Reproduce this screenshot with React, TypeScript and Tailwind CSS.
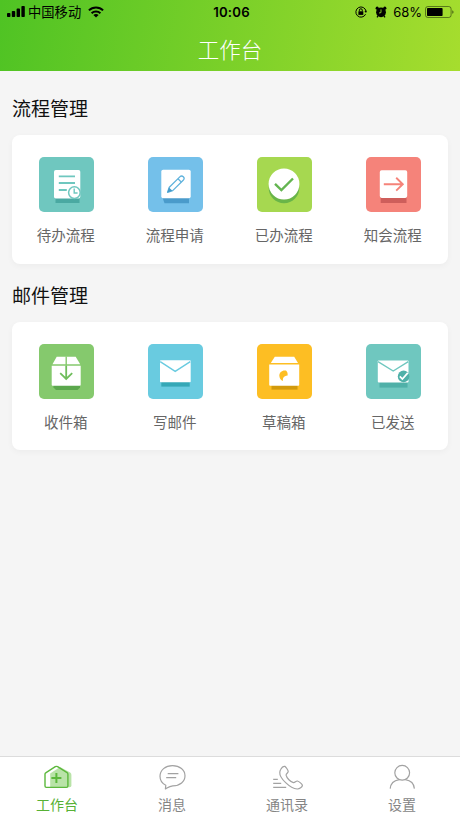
import type { ReactNode } from "react";

interface Entry {
  label: string;
  tile: string;
  icon: ReactNode;
}

const flowEntries: Entry[] = [
  {
    label: "待办流程",
    tile: "bg-[#6fc7bf]",
    icon: (
      <>
        <rect x="16.5" y="38" width="24" height="8" fill="#4aa9a2" />
        <rect x="15" y="13" width="26.3" height="28.5" rx="1.8" fill="#fff" />
        <path d="M19.8 19.3H36M19.8 26H36M19.8 33H27.8" stroke="#6fc7bf" strokeWidth="1.8" />
        <circle cx="35.4" cy="35.6" r="5.8" fill="#fff" stroke="#6fc7bf" strokeWidth="1.5" />
        <path d="M35.2 31.6V36H38.6" fill="none" stroke="#6fc7bf" strokeWidth="1.4" />
      </>
    ),
  },
  {
    label: "流程申请",
    tile: "bg-[#74c0ea]",
    icon: (
      <>
        <path d="M15 38H41V46.3H16.5L15 42Z" fill="#4a9bcb" />
        <rect x="13.3" y="12.7" width="29.4" height="28.6" rx="1.8" fill="#fff" />
        <g fill="none" stroke="#5fb2dc" strokeWidth="1.3" strokeLinejoin="round">
          <path d="M19.6 35.3L21.3 30.2L31.8 19.9Q33.6 18.2 35.3 19.8Q37 21.5 35.2 23.3L24.7 33.6Z" />
          <path d="M30 21.8L33.3 25.1" />
        </g>
        <path d="M19.3 35.6L21 30.6L24.4 33.8Z" fill="#459bca" />
      </>
    ),
  },
  {
    label: "已办流程",
    tile: "bg-[#a6d850]",
    icon: (
      <>
        <circle cx="27" cy="31" r="15.3" fill="#69b548" />
        <circle cx="27" cy="27" r="15.4" fill="#fff" />
        <path d="M18 26.8L24.4 33L36 21.5" fill="none" stroke="#64b551" strokeWidth="2.4" />
      </>
    ),
  },
  {
    label: "知会流程",
    tile: "bg-[#f5837a]",
    icon: (
      <>
        <rect x="14.7" y="38" width="25.8" height="8" fill="#ce5e5b" />
        <rect x="13.8" y="13.3" width="27.4" height="27.6" rx="1.8" fill="#fff" />
        <path d="M17.8 27.2H37M30.2 20.8L36.8 27.2L30.2 33.6" fill="none" stroke="#f5837a" strokeWidth="1.9" />
      </>
    ),
  },
];

const mailEntries: Entry[] = [
  {
    label: "收件箱",
    tile: "bg-[#85c96d]",
    icon: (
      <>
        <path d="M14.5 39H41V43.5L38.5 46H17L14.5 43.5Z" fill="#5ba74d" />
        <path d="M17.7 12.8H36.7L41.2 20.3H13.5Z" fill="#fff" />
        <path d="M12.7 21.8H41.7V40.8Q41.7 41.8 40.7 41.8H13.7Q12.7 41.8 12.7 40.8Z" fill="#fff" />
        <path d="M27.2 12.5V22" stroke="#85c96d" strokeWidth="1.4" />
        <path d="M27.2 22V34.8M21.2 29.2L27.2 34.9L33.2 29.2" fill="none" stroke="#6fbd5c" strokeWidth="1.8" />
      </>
    ),
  },
  {
    label: "写邮件",
    tile: "bg-[#69cbe0]",
    icon: (
      <>
        <rect x="13.3" y="36" width="28.4" height="6.6" fill="#35a8b7" />
        <rect x="12" y="16.3" width="30.7" height="22" rx="0.8" fill="#fff" />
        <path d="M12.2 17.6L27.2 27.3L42.3 17.6" fill="none" stroke="#69cbe0" strokeWidth="1.4" />
      </>
    ),
  },
  {
    label: "草稿箱",
    tile: "bg-[#fdbe23]",
    icon: (
      <>
        <rect x="14.5" y="38" width="26" height="7.6" fill="#d29a0c" />
        <path d="M17.8 12.8H37.2L41 18.9H13.8Z" fill="#fff" />
        <path d="M12.2 20.5H42.2V40.8Q42.2 41.8 41.2 41.8H13.2Q12.2 41.8 12.2 40.8Z" fill="#fff" />
        <path d="M29 26.5C25 25.8 22.3 28.6 22.3 31.5C22.3 34 23.8 36.2 26 37C25.6 34.4 26.3 32.2 30.6 31.6C30.9 29.2 30.2 27.6 29 26.5Z" fill="#fdbe23" />
      </>
    ),
  },
  {
    label: "已发送",
    tile: "bg-[#6fc7bf]",
    icon: (
      <>
        <rect x="13.5" y="36" width="28" height="7.6" fill="#4fb0a8" />
        <rect x="11.8" y="16.5" width="30.7" height="21.9" rx="0.8" fill="#fff" />
        <path d="M12 17.7L27.2 27L42.3 17.7" fill="none" stroke="#6fc7bf" strokeWidth="1.4" />
        <circle cx="37.6" cy="32.4" r="5.8" fill="#4fb0a8" />
        <path d="M33.8 32.4L36.4 35L41.8 28.9" fill="none" stroke="#fff" strokeWidth="1.7" />
      </>
    ),
  },
];

const tabs = [
  {
    label: "工作台",
    color: "text-[#57b135]",
    stroke: "#5cb83c",
    icon: (
      <>
        <path d="M10.2 9.5L20 3L30.2 8.6Q31.4 9.3 31.4 10.8V21.6Q31.4 23.2 29.8 23.2H10.2Z" fill="#b9e3a8" stroke="none" />
        <path d="M5.7 8.8Q5 9.2 5 10.2V22.1Q5 23.4 6.3 23.4H26.5Q27.9 23.4 27.9 22.1V10.2Q27.9 9.2 27.1 8.7L17.6 2.7Q16.4 2 15.3 2.7Z" strokeWidth="1.4" />
        <path d="M16.4 9V19M11.4 14H21.4" strokeWidth="2" />
      </>
    ),
  },
  {
    label: "消息",
    color: "text-[#858585]",
    stroke: "#a2a2a2",
    icon: (
      <>
        <path d="M10.8 21.2C6.7 19.3 5 16 5 12.3C5 6 10.4 1.6 17.5 1.6C24.8 1.6 30 6 30 11.7C30 17.5 25 21.8 17.8 21.8C14.6 22 12.6 23.6 10.4 24.9Z" />
        <path d="M12.7 9.7H23.4M11.2 13.6H21.2" />
      </>
    ),
  },
  {
    label: "通讯录",
    color: "text-[#858585]",
    stroke: "#a2a2a2",
    icon: (
      <>
        <path d="M10.8 5.2C11.8 3.3 13.4 2 14.9 2.4C16 3 18.2 6.4 18.2 7.6C18.2 9 15.9 9.7 16.1 11.2C16.6 14 20.6 18 23.4 18.6C25 18.8 26 16.7 27.4 17C29 17.4 32.3 20.2 32.4 21.4C32.3 23 29.6 25.1 27.2 25C20 24.6 9.4 14 9.8 8.6C9.8 7.2 10.2 6.2 10.8 5.2Z" />
        <path d="M3.2 15.4H7.8M3.2 19.4H11.2M3.2 23.4H16.2" />
      </>
    ),
  },
  {
    label: "设置",
    color: "text-[#858585]",
    stroke: "#a2a2a2",
    icon: (
      <>
        <circle cx="17.2" cy="8.8" r="7.4" />
        <path d="M5.2 24.6C5.6 19.4 9.4 16.4 14.2 15.6M20.4 15.6C25.4 16.4 29 19.4 29.4 24.6" />
      </>
    ),
  },
];

function StatusBar() {
  return (
    <div className="flex h-6 items-center pl-[7px] pr-[6px] text-[13px] leading-none text-black">
      <div className="flex flex-1 items-center">
        <svg width="18" height="11" viewBox="0 0 18 11" fill="currentColor">
          <rect x="0" y="7" width="3.4" height="4" rx="0.8" />
          <rect x="4.8" y="5" width="3.4" height="6" rx="0.8" />
          <rect x="9.6" y="2.6" width="3.4" height="8.4" rx="0.8" />
          <rect x="14.4" y="0" width="3.4" height="11" rx="0.8" />
        </svg>
        <span className="ml-[3px] text-[13.3px]">中国移动</span>
        <svg className="ml-[7px]" width="16" height="12" viewBox="0 0 16 12" fill="none" stroke="currentColor" strokeWidth="2">
          <path d="M0.9 4.4C4.8 0.6 11.2 0.6 15.1 4.4" />
          <path d="M3.6 7.2C6 4.9 10 4.9 12.4 7.2" />
          <path d="M8 11.6L5.4 9C6.9 7.8 9.1 7.8 10.6 9Z" fill="currentColor" stroke="none" />
        </svg>
      </div>
      <span className="pt-px pl-[2px] font-[Inter] text-[13.2px] font-semibold tracking-[0.2px]">10:06</span>
      <div className="flex flex-1 items-center justify-end">
        <svg width="12" height="12" viewBox="0 0 12 12" fill="none" stroke="currentColor" strokeWidth="1">
          <path d="M10.6 8.2A5.1 5.1 0 1 1 11 5.2" />
          <path d="M9.4 5L11 6.9L12 4.8Z" fill="currentColor" stroke="none" />
          <rect x="3.4" y="5.3" width="4.9" height="3.6" fill="currentColor" stroke="none" />
          <path d="M4.4 5.4V4.2A1.45 1.45 0 0 1 7.3 4.2V5.4" />
        </svg>
        <svg className="ml-2" width="12" height="12" viewBox="0 0 12 12" fill="currentColor">
          <circle cx="6" cy="6.3" r="4.9" />
          <circle cx="2.2" cy="2.2" r="1.6" />
          <circle cx="9.8" cy="2.2" r="1.6" />
          <path d="M3 9.8L2 11.3M9 9.8L10 11.3" stroke="currentColor" strokeWidth="1.2" />
          <path d="M6 3.4V6.6L4 7" fill="none" stroke="#8fd62c" strokeWidth="0.9" />
        </svg>
        <span className="ml-[6px] font-[Inter] text-[13px]">68%</span>
        <svg className="ml-[3px]" width="29" height="13" viewBox="0 0 29 13">
          <rect x="0.5" y="0.5" width="25.6" height="11" rx="2.4" fill="none" stroke="#000" strokeOpacity="0.45" />
          <rect x="2" y="2" width="15.6" height="8" rx="0.8" />
          <path d="M27.2 4.2Q28.6 4.6 28.6 6T27.2 7.8Z" fillOpacity="0.5" />
        </svg>
      </div>
    </div>
  );
}

function Section({ title, entries }: { title: string; entries: Entry[] }) {
  return (
    <section>
      <h2 className="flex h-[58px] items-center pt-[3px] text-[19px] leading-none text-[#111]">{title}</h2>
      <div className="grid h-[128.5px] grid-cols-4 rounded-lg bg-white pt-[22px] shadow-[0_2px_6px_rgba(0,0,0,0.04)]">
        {entries.map((entry) => (
          <div key={entry.label} className="flex flex-col items-center">
            <div className={`size-[55px] rounded-[5px] ${entry.tile}`}>
              <svg width="55" height="55" viewBox="0 0 55 55">
                {entry.icon}
              </svg>
            </div>
            <span className="mt-[13px] mr-[1.5px] text-[14.5px] leading-5 text-[#666]">{entry.label}</span>
          </div>
        ))}
      </div>
    </section>
  );
}

export default function App() {
  return (
    <div className="flex h-[818px] w-[460px] flex-col overflow-hidden bg-[#f5f5f5] font-['Noto_Sans_CJK_SC',sans-serif]">
      <header className="h-[71px] bg-[linear-gradient(100deg,#4fc324,#a6dd2e)]">
        <StatusBar />
        <h1 className="flex h-[47px] items-center justify-center pt-[3px] text-[21.5px] leading-none font-light text-white">
          工作台
        </h1>
      </header>

      <main className="flex-1 px-3 pt-[6px]">
        <Section title="流程管理" entries={flowEntries} />
        <Section title="邮件管理" entries={mailEntries} />
      </main>

      <nav className="grid h-[62px] grid-cols-4 border-t border-[#dcdcdc] bg-white">
        {tabs.map((tab) => (
          <div key={tab.label} className={`flex flex-col items-center pt-[7px] ${tab.color}`}>
            <svg
              width="35"
              height="27"
              viewBox="0 0 35 27"
              fill="none"
              stroke={tab.stroke}
              strokeWidth="1.2"
              strokeLinejoin="round"
            >
              {tab.icon}
            </svg>
            <span className="mt-[3px] mr-px text-[14px] leading-5">{tab.label}</span>
          </div>
        ))}
      </nav>
    </div>
  );
}
